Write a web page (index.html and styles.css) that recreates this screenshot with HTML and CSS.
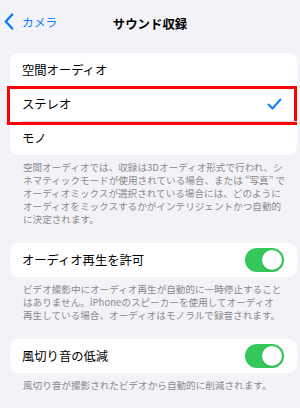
FILE: index.html
```html
<!DOCTYPE html>
<html lang="ja">

<head>
    <meta charset="UTF-8" />
    <meta name="viewport" content="width=device-width, initial-scale=1.0" />
    <title>サウンド収録</title>
    <link rel="stylesheet" href="styles.css">
</head>

<body>
    <div class="nav">
        <a class="back" href="#">
            <svg width="10" height="17" viewBox="0 0 10 17">
                <polyline points="8.2,1.5 1.8,8.5 8.2,15.5" fill="none" stroke="#0a7aff" stroke-width="2.3" stroke-linecap="round" stroke-linejoin="round" />
            </svg>
            <span>カメラ</span>
        </a>
        <h1>サウンド収録</h1>
    </div>

    <div class="group">
        <div class="row">空間オーディオ</div>
        <div class="row selected">
            <span>ステレオ</span>
            <svg class="check" width="15" height="12" viewBox="0 0 15 12">
                <polyline points="1.5,6.5 5.5,10.5 13.5,1.5" fill="none" stroke="#0a7aff" stroke-width="1.9" stroke-linecap="round" stroke-linejoin="round" />
            </svg>
        </div>
        <div class="row">モノ</div>
    </div>
    <p class="note">空間オーディオでは、収録は3Dオーディオ形式で行われ、シネマティックモードが使用されている場合、または “写真” でオーディオミックスが選択されている場合には、どのようにオーディオをミックスするかがインテリジェントかつ自動的に決定されます。</p>

    <div class="group">
        <div class="row">
            <span>オーディオ再生を許可</span>
            <span class="toggle"></span>
        </div>
    </div>
    <p class="note">ビデオ撮影中にオーディオ再生が自動的に一時停止することはありません。iPhoneのスピーカーを使用してオーディオ<br>再生している場合、オーディオはモノラルで録音されます。</p>

    <div class="group">
        <div class="row">
            <span>風切り音の低減</span>
            <span class="toggle"></span>
        </div>
    </div>
    <p class="note">風切り音が撮影されたビデオから自動的に削減されます。</p>
</body>

</html>
```

FILE: styles.css
```css
body {
    margin: 0;
    font-family: "Noto Sans CJK JP", "Noto Sans", sans-serif;
    background-color: #f2f2f7;
    color: #000;
}

.nav {
    height: 41px;
    padding-top: 3px;
    display: flex;
    align-items: center;
    justify-content: center;
    position: relative;
}

.nav h1 {
    margin: 0;
    font-size: 12.4px;
    font-weight: bold;
    line-height: 16px;
}

.back {
    position: absolute;
    left: 4px;
    top: 13px;
    display: flex;
    align-items: center;
    gap: 8px;
    text-decoration: none;
    color: #0a7aff;
    font-size: 11.8px;
    line-height: 17px;
}

.group {
    margin: 0 3px 0 10px;
    background: #fff;
    border-radius: 9px;
}

.nav + .group {
    margin-top: 9px;
}

.row {
    height: 34px;
    padding: 0 13px 0 12px;
    display: flex;
    align-items: center;
    justify-content: space-between;
    font-size: 12.3px;
    position: relative;
}

.row + .row::before {
    content: "";
    position: absolute;
    left: 12px;
    right: 0;
    top: 0;
    border-top: 0.5px solid #d6d6da;
}

.selected::after {
    content: "";
    position: absolute;
    left: -3px;
    right: 0;
    top: -1px;
    bottom: -4px;
    border: 3px solid #f00;
}

.check {
    margin-right: 2px;
}

.toggle {
    width: 39px;
    height: 24px;
    border-radius: 12px;
    background: #34c759;
    position: relative;
}

.toggle::after {
    content: "";
    position: absolute;
    right: 2px;
    top: 2px;
    width: 20px;
    height: 20px;
    border-radius: 50%;
    background: #fff;
    box-shadow: 0 1px 2px rgba(0, 0, 0, 0.15);
}

.note {
    margin: 6px 14px 17px 23px;
    font-size: 9.6px;
    line-height: 13px;
    color: #8a8a8e;
}
```
